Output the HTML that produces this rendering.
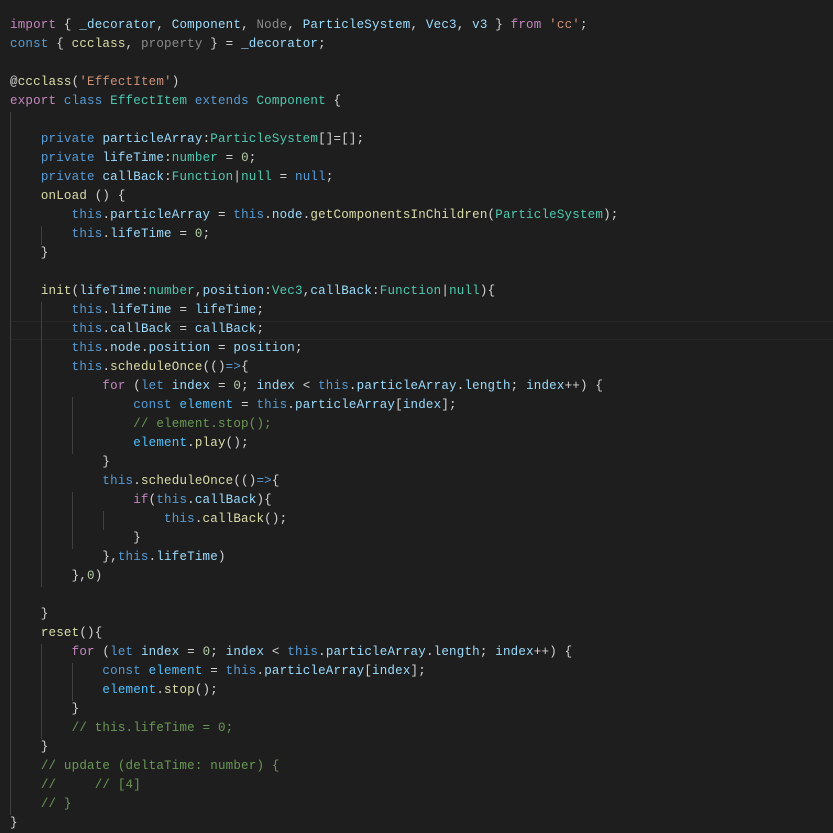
<!DOCTYPE html>
<html><head><meta charset="utf-8"><style>
html,body{margin:0;padding:0;background:#1e1e1e;width:833px;height:832px;overflow:hidden}
pre{position:absolute;left:10px;top:16px;margin:0;font-family:"Liberation Mono",monospace;font-size:12.5px;letter-spacing:0.2px;line-height:19px;color:#d4d4d4;white-space:pre}
.k{color:#569cd6}.p{color:#c586c0}.v{color:#9cdcfe}.t{color:#4ec9b0}.f{color:#dcdcaa}.s{color:#ce9178}.n{color:#b5cea8}.c{color:#6a9955}.g{color:#8a8a8a}.d{color:#4fc1ff}
.gd{position:absolute;width:1px;background:#404040}
.hl{position:absolute;left:10px;right:0;top:321px;height:17px;border-top:1px solid #282828;border-bottom:1px solid #282828}
</style></head><body>
<div class="hl"></div>
<div class="gd" style="left:10px;top:112px;height:703px"></div>
<div class="gd" style="left:41px;top:226px;height:19px"></div>
<div class="gd" style="left:41px;top:302px;height:285px"></div>
<div class="gd" style="left:72px;top:397px;height:57px"></div>
<div class="gd" style="left:72px;top:492px;height:57px"></div>
<div class="gd" style="left:103px;top:511px;height:19px"></div>
<div class="gd" style="left:41px;top:644px;height:95px"></div>
<div class="gd" style="left:72px;top:663px;height:38px"></div>
<pre><span class="p">import</span> { <span class="v">_decorator</span>, <span class="v">Component</span>, <span class="g">Node</span>, <span class="v">ParticleSystem</span>, <span class="v">Vec3</span>, <span class="v">v3</span> } <span class="p">from</span> <span class="s">'cc'</span>;
<span class="k">const</span> { <span class="f">ccclass</span>, <span class="g">property</span> } = <span class="v">_decorator</span>;

@<span class="f">ccclass</span>(<span class="s">'EffectItem'</span>)
<span class="p">export</span> <span class="k">class</span> <span class="t">EffectItem</span> <span class="k">extends</span> <span class="t">Component</span> {

    <span class="k">private</span> <span class="v">particleArray</span>:<span class="t">ParticleSystem</span>[]=[];
    <span class="k">private</span> <span class="v">lifeTime</span>:<span class="t">number</span> = <span class="n">0</span>;
    <span class="k">private</span> <span class="v">callBack</span>:<span class="t">Function</span>|<span class="t">null</span> = <span class="k">null</span>;
    <span class="f">onLoad</span> () {
        <span class="k">this</span>.<span class="v">particleArray</span> = <span class="k">this</span>.<span class="v">node</span>.<span class="f">getComponentsInChildren</span>(<span class="t">ParticleSystem</span>);
        <span class="k">this</span>.<span class="v">lifeTime</span> = <span class="n">0</span>;
    }

    <span class="f">init</span>(<span class="v">lifeTime</span>:<span class="t">number</span>,<span class="v">position</span>:<span class="t">Vec3</span>,<span class="v">callBack</span>:<span class="t">Function</span>|<span class="t">null</span>){
        <span class="k">this</span>.<span class="v">lifeTime</span> = <span class="v">lifeTime</span>;
        <span class="k">this</span>.<span class="v">callBack</span> = <span class="v">callBack</span>;
        <span class="k">this</span>.<span class="v">node</span>.<span class="v">position</span> = <span class="v">position</span>;
        <span class="k">this</span>.<span class="f">scheduleOnce</span>(()<span class="k">=&gt;</span>{
            <span class="p">for</span> (<span class="k">let</span> <span class="v">index</span> = <span class="n">0</span>; <span class="v">index</span> &lt; <span class="k">this</span>.<span class="v">particleArray</span>.<span class="v">length</span>; <span class="v">index</span>++) {
                <span class="k">const</span> <span class="d">element</span> = <span class="k">this</span>.<span class="v">particleArray</span>[<span class="v">index</span>];
                <span class="c">// element.stop();</span>
                <span class="d">element</span>.<span class="f">play</span>();
            }
            <span class="k">this</span>.<span class="f">scheduleOnce</span>(()<span class="k">=&gt;</span>{
                <span class="p">if</span>(<span class="k">this</span>.<span class="v">callBack</span>){
                    <span class="k">this</span>.<span class="f">callBack</span>();
                }
            },<span class="k">this</span>.<span class="v">lifeTime</span>)
        },<span class="n">0</span>)

    }
    <span class="f">reset</span>(){
        <span class="p">for</span> (<span class="k">let</span> <span class="v">index</span> = <span class="n">0</span>; <span class="v">index</span> &lt; <span class="k">this</span>.<span class="v">particleArray</span>.<span class="v">length</span>; <span class="v">index</span>++) {
            <span class="k">const</span> <span class="d">element</span> = <span class="k">this</span>.<span class="v">particleArray</span>[<span class="v">index</span>];
            <span class="d">element</span>.<span class="f">stop</span>();
        }
        <span class="c">// this.lifeTime = 0;</span>
    }
    <span class="c">// update (deltaTime: number) {</span>
    <span class="c">//     // [4]</span>
    <span class="c">// }</span>
}</pre>
</body></html>
